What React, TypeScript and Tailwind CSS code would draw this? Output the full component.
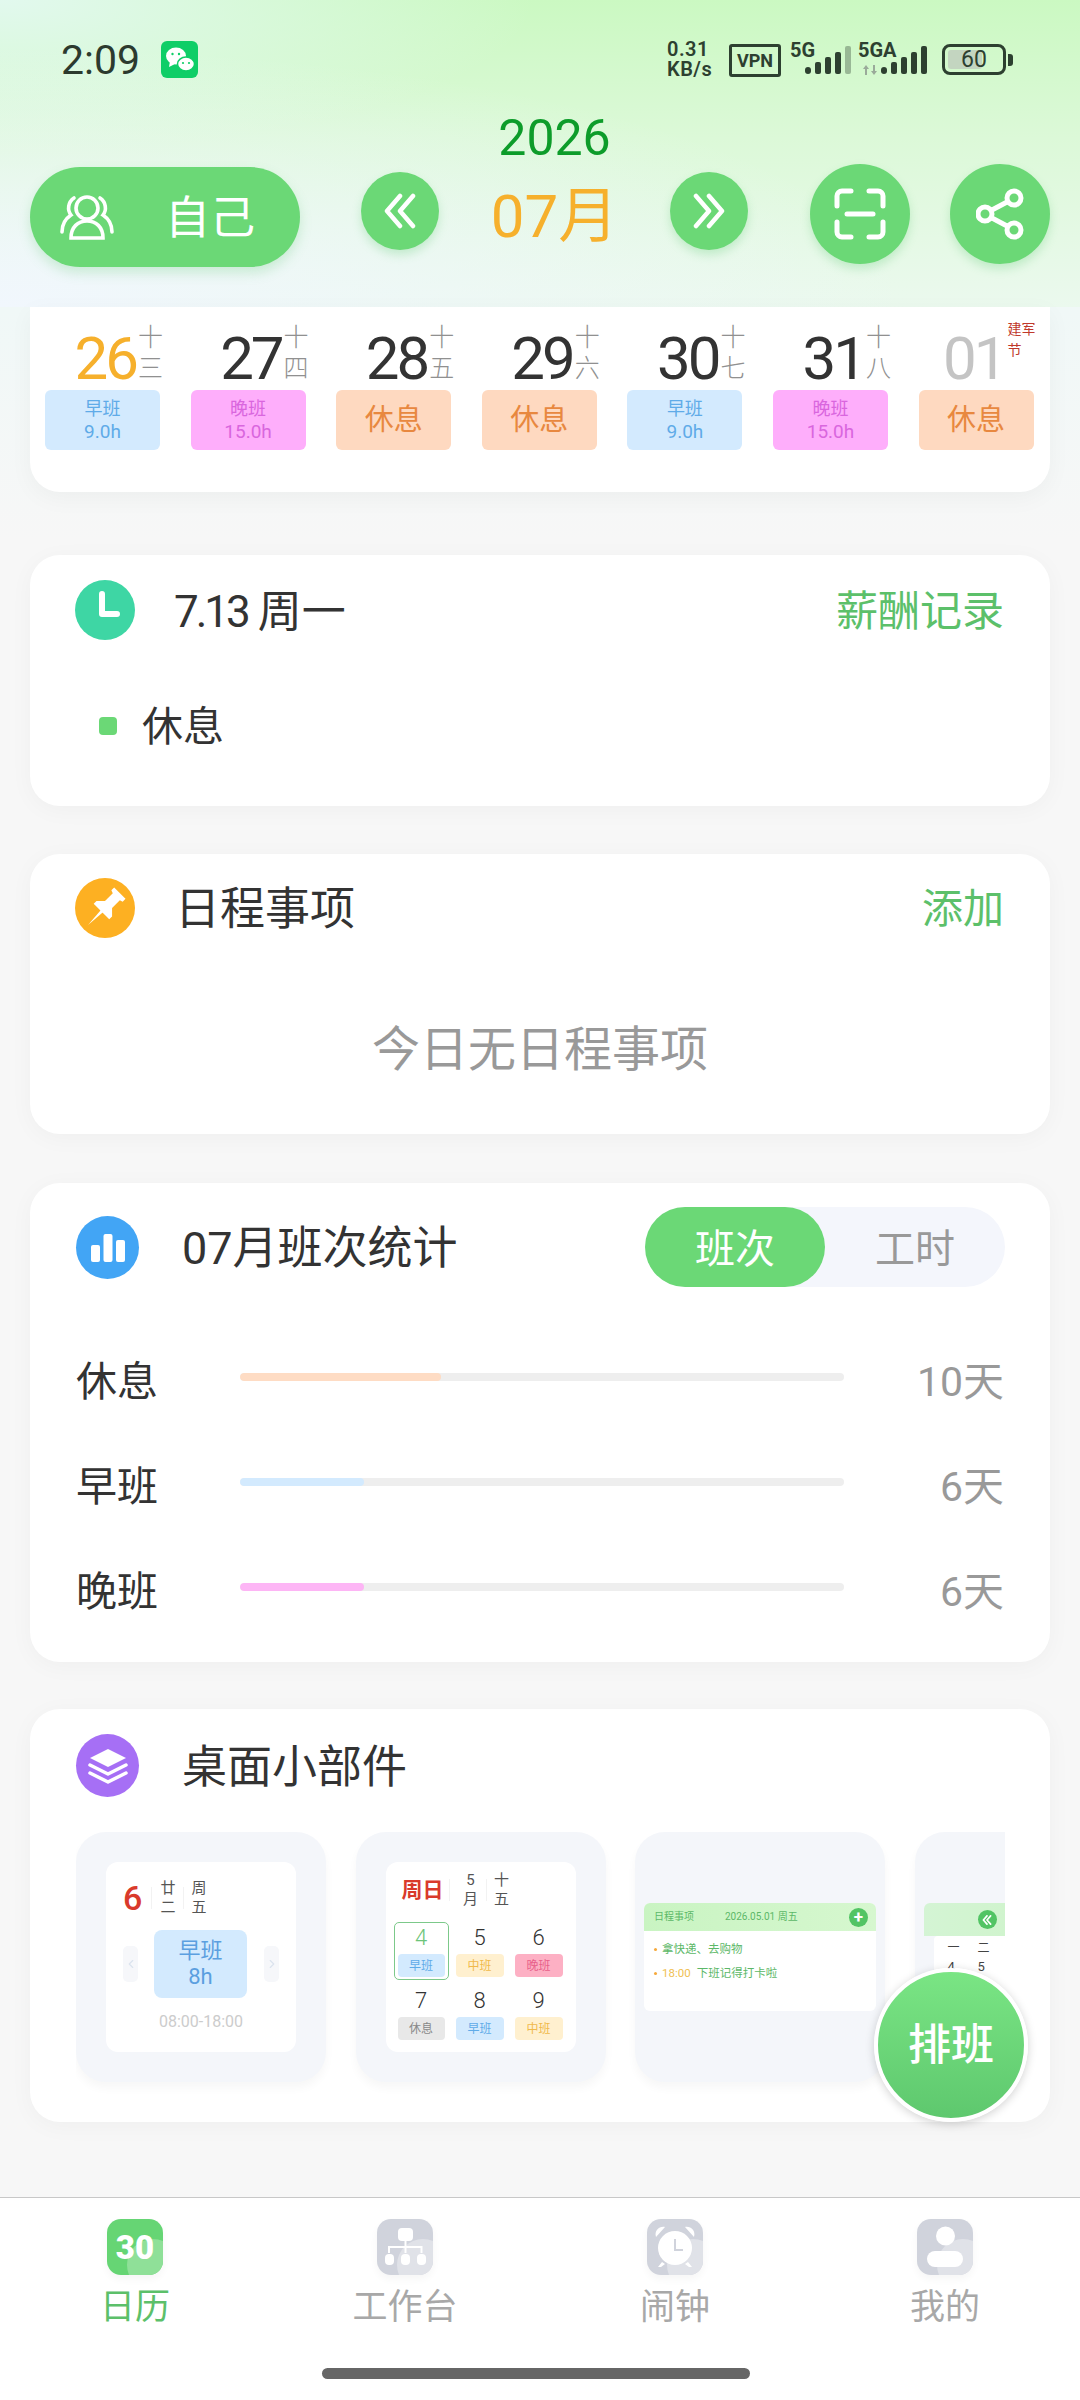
import type { ReactNode } from 'react'
import { ChevronLeft, ChevronRight } from 'lucide-react'

type Shift = 'early' | 'late' | 'rest'

const week: { day: string; lunar: string[]; shift: Shift; hours?: string; tone: string; holiday?: boolean }[] = [
  { day: '26', lunar: ['十', '三'], shift: 'early', hours: '9.0h', tone: 'text-[#f6b02c]' },
  { day: '27', lunar: ['十', '四'], shift: 'late', hours: '15.0h', tone: 'text-[#333333]' },
  { day: '28', lunar: ['十', '五'], shift: 'rest', tone: 'text-[#333333]' },
  { day: '29', lunar: ['十', '六'], shift: 'rest', tone: 'text-[#333333]' },
  { day: '30', lunar: ['十', '七'], shift: 'early', hours: '9.0h', tone: 'text-[#333333]' },
  { day: '31', lunar: ['十', '八'], shift: 'late', hours: '15.0h', tone: 'text-[#333333]' },
  { day: '01', lunar: ['建军', '节'], shift: 'rest', tone: 'text-[#c4c4c4]', holiday: true },
]

const chipStyle: Record<Shift, string> = {
  early: 'bg-[#d3eafe] text-[#5fabe8]',
  late: 'bg-[#feaefb] text-[#d966de]',
  rest: 'bg-[#fed9c0] text-[#e8883f]',
}

const chipLabel: Record<Shift, string> = { early: '早班', late: '晚班', rest: '休息' }

const stats = [
  { label: '休息', value: '10天', fill: 'w-[201px] bg-[#fedcc4]' },
  { label: '早班', value: '6天', fill: 'w-[124px] bg-[#d3eafe]' },
  { label: '晚班', value: '6天', fill: 'w-[124px] bg-[#fdb5f5]' },
]

const miniDays = [
  { day: '4', label: '早班', chip: 'bg-[#d3eafe] text-[#5fabe8]', active: true },
  { day: '5', label: '中班', chip: 'bg-[#fff0cf] text-[#f0b94b]' },
  { day: '6', label: '晚班', chip: 'bg-[#fdb0c4] text-[#e8608a]' },
  { day: '7', label: '休息', chip: 'bg-[#e8e8e8] text-[#888888]' },
  { day: '8', label: '早班', chip: 'bg-[#d3eafe] text-[#5fabe8]' },
  { day: '9', label: '中班', chip: 'bg-[#fff0cf] text-[#f0b94b]' },
]

function Signal({ lastDim }: { lastDim?: boolean }) {
  return (
    <svg width="46" height="28" viewBox="0 0 46 28" fill="#2d4030">
      <rect x="0" y="21" width="6" height="7" rx="3" />
      <rect x="10" y="16" width="6" height="12" rx="2" />
      <rect x="20" y="11" width="6" height="17" rx="2" />
      <rect x="30" y="6" width="6" height="22" rx="2" />
      <rect x="40" y="0" width="6" height="28" rx="2" opacity={lastDim ? 0.35 : 1} />
    </svg>
  )
}

function StatusBar() {
  return (
    <div className="flex h-[105px] items-start pt-[41px]">
      <span className="ml-[61px] w-[80px] text-[41px] leading-[38px] text-[#2c3a2e]">2:09</span>
      <div className="ml-[20px] flex h-[37px] w-[37px] items-center justify-center rounded-[6px] bg-[#0fce67]">
        <svg width="30" height="28" viewBox="0 0 30 28" fill="#ffffff">
          <ellipse cx="11" cy="10" rx="10" ry="8.5" />
          <path d="M5 15l-1 6 6-3z" />
          <ellipse cx="21" cy="18" rx="8.5" ry="7" stroke="#0fce67" strokeWidth="1.5" />
          <circle cx="7.5" cy="8" r="1.2" fill="#0fce67" />
          <circle cx="14" cy="8" r="1.2" fill="#0fce67" />
          <circle cx="18" cy="17" r="1.1" fill="#0fce67" />
          <circle cx="24" cy="17" r="1.1" fill="#0fce67" />
        </svg>
      </div>
      <div className="ml-[469px] -mt-[2px] flex w-[50px] flex-col text-[20px] leading-[20px] font-semibold tracking-[0.5px] text-[#2d4030]">
        <span>0.31</span>
        <span>KB/s</span>
      </div>
      <div className="ml-[12px] mt-[3px] flex h-[33px] w-[52px] items-center justify-center rounded-[3px] border-[3px] border-[#2d4030] text-[18px] font-bold text-[#2d4030]">
        VPN
      </div>
      <div className="relative ml-[9px] h-[34px] w-[61px]">
        <span className="block text-[20px] leading-[18px] font-bold text-[#2d4030]">5G</span>
        <div className="absolute top-[5px] left-[15px]">
          <Signal lastDim />
        </div>
      </div>
      <div className="relative ml-[7px] h-[34px] w-[69px]">
        <span className="block text-[20px] leading-[18px] font-bold text-[#2d4030]">5GA</span>
        <svg className="absolute top-[24px] left-[5px]" width="14" height="10" viewBox="0 0 14 10" fill="#9aaa9a">
          <path d="M3 0l3 4H4v6H2V4H0zM11 10L8 6h2V0h2v6h2z" />
        </svg>
        <div className="absolute top-[5px] left-[23px]">
          <Signal />
        </div>
      </div>
      <div className="ml-[15px] mt-[3px] flex items-center">
        <div className="relative flex h-[31px] w-[64px] items-center justify-center overflow-hidden rounded-[8px] border-[3px] border-[#2d4030] p-[3px]">
          <div className="absolute top-[3px] bottom-[3px] left-[3px] w-[34px] rounded-[3px] bg-[#c3d5c0]" />
          <span className="relative text-[23px] leading-none text-[#2d4030]">60</span>
        </div>
        <div className="ml-[2px] h-[12px] w-[5px] rounded-r-[3px] bg-[#2d4030]" />
      </div>
    </div>
  )
}

function RoundButton({ size, children, extra }: { size: string; children: ReactNode; extra: string }) {
  return (
    <div className={`flex shrink-0 items-center justify-center rounded-full bg-[#6bd876] shadow-[0_5px_10px_rgba(90,200,110,0.28)] ${size} ${extra}`}>
      {children}
    </div>
  )
}

function DoubleChevron({ flip }: { flip?: boolean }) {
  return (
    <svg width="32" height="36" viewBox="0 0 32 36" fill="none" stroke="#ffffff" strokeWidth="4.5" strokeLinecap="round" strokeLinejoin="round" className={flip ? 'rotate-180' : ''}>
      <path d="M16 3L3 18l13 15" />
      <path d="M29 3L16 18l13 15" />
    </svg>
  )
}

function Header() {
  return (
    <div className="h-[307px] shrink-0 bg-[radial-gradient(ellipse_at_0%_100%,#f1f7fd_0%,rgba(241,247,253,0)_60%),radial-gradient(ellipse_at_0%_0%,#e2f9ee_0%,rgba(226,249,238,0)_35%),linear-gradient(180deg,#cbf9c2_0%,#dcf9d8_45%,#ebf9ee_100%)]">
      <StatusBar />
      <div className="flex h-[170px] items-start">
        <div className="ml-[30px] mt-[62px] flex h-[100px] w-[270px] shrink-0 items-center rounded-full bg-[#6bd876] pl-[30px] shadow-[0_6px_12px_rgba(90,200,110,0.25)]">
          <svg width="54" height="46" viewBox="0 0 54 46" fill="none" stroke="#ffffff" strokeWidth="3.6" strokeLinecap="round">
            <circle cx="27" cy="14" r="11" />
            <path d="M11 44C11 33 18 27 27 27S43 33 43 44Z" />
            <path d="M14 4C8 8 7 16 11 21 5 25 2 31 2 38" />
            <path d="M40 4C46 8 47 16 43 21 49 25 52 31 52 38" />
          </svg>
          <span className="ml-[51px] mt-[3px] text-[45px] leading-none text-white">自己</span>
        </div>
        <RoundButton size="h-[78px] w-[78px]" extra="ml-[61px] mt-[67px]">
          <DoubleChevron />
        </RoundButton>
        <div className="flex w-[231px] shrink-0 flex-col items-center">
          <span className="mt-[8px] text-[50px] leading-[50px] text-[#0d9c2a]">2026</span>
          <span className="mt-[22px] text-[60px] leading-[64px] text-[#f6b02c]">07月</span>
        </div>
        <RoundButton size="h-[78px] w-[78px]" extra="mt-[67px]">
          <DoubleChevron flip />
        </RoundButton>
        <RoundButton size="h-[100px] w-[100px]" extra="ml-[62px] mt-[59px]">
          <svg width="52" height="52" viewBox="0 0 52 52" fill="none" stroke="#ffffff" strokeWidth="5" strokeLinecap="round">
            <path d="M3 18V8a5 5 0 0 1 5-5h9" />
            <path d="M35 3h9a5 5 0 0 1 5 5v10" />
            <path d="M3 34v10a5 5 0 0 0 5 5h9" />
            <path d="M49 34v10a5 5 0 0 1-5 5h-9" />
            <path d="M13 26h26" />
          </svg>
        </RoundButton>
        <RoundButton size="h-[100px] w-[100px]" extra="ml-[40px] mt-[59px]">
          <svg width="48" height="52" viewBox="0 0 48 52" fill="none" stroke="#ffffff" strokeWidth="5">
            <circle cx="38" cy="10" r="7" />
            <circle cx="9" cy="26" r="7" />
            <circle cx="38" cy="42" r="7" />
            <path d="M15 22.5L32 13.5M15 29.5L32 38.5" />
          </svg>
        </RoundButton>
      </div>
    </div>
  )
}

function CalendarStrip() {
  return (
    <div className="flex h-[185px] gap-[30.6px] rounded-b-[30px] bg-white px-[15px] pt-[17px] shadow-[0_6px_24px_rgba(0,0,0,0.04)]">
      {week.map((d) => (
        <div key={d.day} className="w-[115px] shrink-0">
          <div className="flex h-[66px] items-end justify-end">
            <span className={`text-[60px] leading-[62px] tracking-[-3px] ${d.tone}`}>{d.day}</span>
            {d.holiday ? (
              <div className="-mr-[2px] mb-[29px] ml-[3px] w-[28px] text-[14px] leading-[21px] text-[#c0392b]">
                <div className="whitespace-nowrap">{d.lunar[0]}</div>
                <div>{d.lunar[1]}</div>
              </div>
            ) : (
              <div className="-mr-[2px] mb-[6px] ml-[3px] flex w-[23px] flex-col items-center text-[25px] leading-[31px] font-light text-[#909090]">
                <span>{d.lunar[0]}</span>
                <span>{d.lunar[1]}</span>
              </div>
            )}
          </div>
          <div className={`flex h-[60px] flex-col items-center justify-center rounded-[6px] ${chipStyle[d.shift]}`}>
            {d.hours ? (
              <>
                <span className="text-[18px] leading-[23px]">{chipLabel[d.shift]}</span>
                <span className="text-[19px] leading-[23px]">{d.hours}</span>
              </>
            ) : (
              <span className="text-[29px] leading-none">{chipLabel[d.shift]}</span>
            )}
          </div>
        </div>
      ))}
    </div>
  )
}

function IconDot({ color, size, children }: { color: string; size: string; children: ReactNode }) {
  return <div className={`flex shrink-0 items-center justify-center rounded-full ${color} ${size}`}>{children}</div>
}

function TodayCard() {
  return (
    <section className="mt-[63px] h-[251px] rounded-[30px] bg-white pt-[25px] shadow-[0_4px_24px_rgba(0,0,0,0.035)]">
      <div className="flex h-[60px] items-center pr-[46px] pl-[45px]">
        <IconDot color="bg-[#3ed6a4]" size="h-[60px] w-[60px]">
          <svg width="60" height="60" viewBox="0 0 60 60" fill="none" stroke="#ffffff" strokeWidth="6" strokeLinecap="round" strokeLinejoin="round">
            <path d="M27 14v20h15" />
          </svg>
        </IconDot>
        <span className="ml-[39px] mt-[3px] text-[44px] leading-none tracking-[-3px] text-[#333333]">7.13</span>
        <span className="ml-[10px] mt-[3px] text-[44px] leading-none text-[#333333]">周一</span>
        <span className="ml-auto mt-[3px] text-[42px] leading-none text-[#5cc06a]">薪酬记录</span>
      </div>
      <div className="mt-[59px] ml-[69px] flex items-center">
        <div className="h-[18px] w-[18px] rounded-[4px] bg-[#6bd876]" />
        <span className="ml-[25px] mt-[3px] text-[41px] leading-[50px] text-[#333333]">休息</span>
      </div>
    </section>
  )
}

function ScheduleCard() {
  return (
    <section className="mt-[48px] h-[280px] rounded-[30px] bg-white pt-[24px] shadow-[0_4px_24px_rgba(0,0,0,0.035)]">
      <div className="flex h-[60px] items-center pr-[46px] pl-[45px]">
        <IconDot color="bg-[#fdb022]" size="h-[60px] w-[60px]">
          <svg width="60" height="60" viewBox="0 0 60 60" fill="#ffffff">
            <g transform="rotate(45 30 30)">
              <path d="M22 9h16v4l-3 1v11l6 6v4H19v-4l6-6V14l-3-1z" />
              <path d="M28.5 34h3L30 54z" />
            </g>
          </svg>
        </IconDot>
        <span className="ml-[40px] mt-[3px] text-[45px] leading-none text-[#333333]">日程事项</span>
        <span className="ml-auto mt-[3px] text-[41px] leading-none text-[#5cc06a]">添加</span>
      </div>
      <div className="mt-[82px] text-center text-[48px] leading-[60px] text-[#999999]">今日无日程事项</div>
    </section>
  )
}

function StatsCard() {
  return (
    <section className="mt-[49px] h-[479px] rounded-[30px] bg-white pt-[24px] shadow-[0_4px_24px_rgba(0,0,0,0.035)]">
      <div className="flex h-[80px] items-center pr-[45px] pl-[46px]">
        <IconDot color="bg-[#42a5f5]" size="h-[63px] w-[63px]">
          <svg width="36" height="30" viewBox="0 0 36 30" fill="#ffffff">
            <rect x="1" y="13" width="9" height="17" rx="2" />
            <rect x="13.5" y="2" width="9" height="28" rx="2" />
            <rect x="26" y="8" width="9" height="22" rx="2" />
          </svg>
        </IconDot>
        <span className="ml-[43px] mt-[3px] text-[45px] leading-none text-[#333333]">07月班次统计</span>
        <div className="ml-auto flex h-[80px] w-[360px] rounded-full bg-[#f4f6fc]">
          <div className="flex h-[80px] w-[180px] items-center justify-center rounded-full bg-[#6bd876] pt-[5px] text-[40px] leading-none text-white">班次</div>
          <div className="flex h-[80px] w-[180px] items-center justify-center pt-[5px] text-[40px] leading-none text-[#999999]">工时</div>
        </div>
      </div>
      <div className="mt-[68px] flex flex-col gap-[55px] pr-[46px] pl-[46px]">
        {stats.map((s) => (
          <div key={s.label} className="flex h-[50px] items-center">
            <span className="mt-[5px] w-[164px] text-[41px] leading-none text-[#333333]">{s.label}</span>
            <div className="mb-[6px] h-[8px] w-[604px] overflow-hidden rounded-full bg-[#eeeeee]">
              <div className={`h-full rounded-full ${s.fill}`} />
            </div>
            <span className="mt-[5px] flex-1 text-right text-[41px] leading-none text-[#999999]">{s.value}</span>
          </div>
        ))}
      </div>
    </section>
  )
}

function Tile({ children }: { children: ReactNode }) {
  return (
    <div className="flex h-[250px] w-[250px] shrink-0 items-center justify-center rounded-[30px] bg-[#f4f6fa] shadow-[0_6px_10px_rgba(0,0,0,0.035)]">
      {children}
    </div>
  )
}

function TwoChar({ top, bottom, width }: { top: string; bottom: string; width: string }) {
  return (
    <div className={`flex flex-col items-center text-[15px] leading-[19px] text-[#555555] ${width}`}>
      <span>{top}</span>
      <span>{bottom}</span>
    </div>
  )
}

function ShiftTile() {
  return (
    <Tile>
      <div className="h-[190px] w-[190px] rounded-[12px] bg-white">
        <div className="flex h-[38px] translate-y-[17px] items-center pl-[17px]">
          <span className="w-[22px] text-[34px] leading-none font-medium text-[#d93a2b]">6</span>
          <div className="ml-[6px] h-[22px] w-px bg-[#f2f2f2]" />
          <TwoChar top="廿" bottom="二" width="ml-[7px] w-[18px]" />
          <div className="ml-[6px] h-[22px] w-px bg-[#f2f2f2]" />
          <TwoChar top="周" bottom="五" width="ml-[6px] w-[18px]" />
        </div>
        <div className="mt-[30px] flex items-center pl-[17px]">
          <div className="flex h-[36px] w-[15px] items-center justify-center rounded-[5px] bg-[#f6f7fa]">
            <ChevronLeft size={14} className="text-[#dbe3ee]" />
          </div>
          <div className="ml-[16px] flex h-[68px] w-[93px] flex-col items-center justify-center rounded-[8px] bg-[#d3eafe] text-[22px] leading-[26px] text-[#5b9fe0]">
            <span>早班</span>
            <span>8h</span>
          </div>
          <div className="ml-[17px] flex h-[36px] w-[15px] items-center justify-center rounded-[5px] bg-[#f6f7fa]">
            <ChevronRight size={14} className="text-[#dbe3ee]" />
          </div>
        </div>
        <div className="mt-[15px] text-center text-[16px] leading-[18px] text-[#cccccc]">08:00-18:00</div>
      </div>
    </Tile>
  )
}

function MonthTile() {
  return (
    <Tile>
      <div className="h-[190px] w-[190px] rounded-[12px] bg-white">
        <div className="box-content flex h-[38px] items-center pt-[9px] pl-[16px]">
          <span className="w-[44px] text-[21px] leading-none font-bold text-[#d93a2b]">周日</span>
          <div className="ml-[3px] h-[22px] w-px bg-[#f2f2f2]" />
          <TwoChar top="5" bottom="月" width="ml-[13px] w-[16px]" />
          <div className="ml-[7px] h-[22px] w-px bg-[#f2f2f2]" />
          <TwoChar top="十" bottom="五" width="ml-[7px] w-[16px]" />
        </div>
        <div className="mt-[13px] grid grid-cols-[47px_48px_48px] gap-x-[11px] gap-y-[8px] pl-[12px]">
          {miniDays.map((d) => (
            <div key={d.day} className="relative flex flex-col items-center">
              {d.active && <div className="absolute -inset-x-[4px] top-0 -bottom-[3px] rounded-[5px] border border-[#7cc98a]" />}
              <span className={`h-[32px] text-[22px] leading-[32px] font-light ${d.active ? 'text-[#6cc47a]' : 'text-[#333333]'}`}>{d.day}</span>
              <div className={`relative flex h-[23px] w-full items-center justify-center rounded-[4px] text-[12px] leading-none ${d.chip}`}>{d.label}</div>
            </div>
          ))}
        </div>
      </div>
    </Tile>
  )
}

function AgendaTile() {
  return (
    <Tile>
      <div className="h-[108px] w-[232px] overflow-hidden rounded-[6px] bg-white">
        <div className="flex h-[28px] items-center bg-[linear-gradient(90deg,#c9f4c2,#d6f7cf)] pr-[8px] pl-[10px] text-[#5cb868]">
          <span className="text-[10px] leading-none">日程事项</span>
          <span className="ml-[31px] text-[10px] leading-none">2026.05.01 周五</span>
          <div className="ml-auto flex h-[19px] w-[19px] items-center justify-center rounded-full bg-[#52c464] text-[17px] leading-none font-bold text-white">+</div>
        </div>
        <div className="mt-[10px] flex items-center pl-[10px] text-[11.5px] leading-[16px] text-[#5cb868]">
          <span className="mr-[5px] h-[3px] w-[3px] rounded-full bg-[#f6a93b]" />
          拿快递、去购物
        </div>
        <div className="mt-[8px] flex items-center pl-[10px] text-[11.5px] leading-[16px] text-[#5cb868]">
          <span className="mr-[5px] h-[3px] w-[3px] rounded-full bg-[#f6a93b]" />
          <span className="mr-[6px] text-[#f0c052]">18:00</span>
          下班记得打卡啦
        </div>
      </div>
    </Tile>
  )
}

function MonthTilePeek() {
  return (
    <Tile>
      <div className="h-[108px] w-[232px] overflow-hidden rounded-[6px] bg-[#f4f6fa]">
        <div className="flex h-[33px] items-center bg-[linear-gradient(90deg,#d4f4d4,#c9f4c2)] pl-[54px]">
          <div className="flex h-[19px] w-[19px] items-center justify-center rounded-full bg-[#52c464]">
            <svg width="10" height="10" viewBox="0 0 32 36" fill="none" stroke="#ffffff" strokeWidth="6" strokeLinecap="round" strokeLinejoin="round">
              <path d="M16 3L3 18l13 15" />
              <path d="M29 3L16 18l13 15" />
            </svg>
          </div>
        </div>
        <div className="ml-[10px] h-[75px] rounded-t-[4px] bg-white pt-[5px] text-[12px] leading-[14px] text-[#444444]">
          <div className="flex pl-[14px]">
            <span className="w-[30px]">一</span>
            <span>二</span>
          </div>
          <div className="mt-[5px] flex pl-[14px] text-[13px]">
            <span className="w-[30px]">4</span>
            <span>5</span>
          </div>
        </div>
      </div>
    </Tile>
  )
}

function WidgetsCard() {
  return (
    <section className="relative mt-[47px] h-[413px] rounded-[30px] bg-white pt-[25px] shadow-[0_4px_24px_rgba(0,0,0,0.035)]">
      <div className="flex h-[63px] items-center pl-[46px]">
        <IconDot color="bg-[#a66ff5]" size="h-[63px] w-[63px]">
          <svg width="40" height="36" viewBox="0 0 40 36" fill="#ffffff">
            <path d="M20 1l18 9-18 9-18-9z" />
            <path d="M2 17l18 9 18-9" fill="none" stroke="#ffffff" strokeWidth="3.5" strokeLinecap="round" strokeLinejoin="round" />
            <path d="M2 25l18 9 18-9" fill="none" stroke="#ffffff" strokeWidth="3.5" strokeLinecap="round" strokeLinejoin="round" />
          </svg>
        </IconDot>
        <span className="ml-[43px] mt-[3px] text-[45px] leading-none text-[#333333]">桌面小部件</span>
      </div>
      <div className="mt-[35px] ml-[46px] flex h-[262px] w-[929px] gap-[29.5px] overflow-hidden">
        <ShiftTile />
        <MonthTile />
        <AgendaTile />
        <MonthTilePeek />
      </div>
      <div className="absolute right-[22px] bottom-0 flex h-[154px] w-[154px] items-center justify-center rounded-full border-[4px] border-white bg-[linear-gradient(180deg,#7ae584,#5ec86e)] text-[43px] leading-none font-medium text-white shadow-[0_2px_10px_rgba(0,0,0,0.18)]">
        排班
      </div>
    </section>
  )
}

function TabIcon({ active, children }: { active?: boolean; children: ReactNode }) {
  return (
    <div className={`relative h-[56px] w-[56px] overflow-hidden rounded-[14px] shadow-[0_4px_8px_rgba(0,0,0,0.04)] ${active ? 'bg-[#66d574]' : 'bg-[#d0d3dc]'}`}>
      <div className={`absolute top-[20px] left-[20px] h-[52px] w-[52px] rounded-full ${active ? 'bg-[#8fe098]' : 'bg-[#e0e2e8]'}`} />
      <div className="absolute inset-0 flex items-center justify-center">{children}</div>
    </div>
  )
}

function BottomNav() {
  const tabs: { label: string; active?: boolean; icon: ReactNode }[] = [
    {
      label: '日历',
      active: true,
      icon: <span className="text-[33px] leading-none font-black text-white">30</span>,
    },
    {
      label: '工作台',
      icon: (
        <svg width="56" height="56" viewBox="0 0 56 56" fill="#ffffff">
          <rect x="21" y="9" width="15" height="13" rx="4" />
          <path d="M27.5 22h2v5h16v7h-2v-5H29.5v5h-2v-5H13v5h-2v-7h16.5z" />
          <rect x="8" y="35" width="9" height="11" rx="4" />
          <rect x="24" y="35" width="9" height="11" rx="4" />
          <rect x="40" y="35" width="9" height="11" rx="4" />
        </svg>
      ),
    },
    {
      label: '闹钟',
      icon: (
        <svg width="56" height="56" viewBox="0 0 56 56" fill="#ffffff">
          <circle cx="28" cy="29" r="17" />
          <path d="M9 18c-2-6 3-11 9-10zM47 18c2-6-3-11-9-10z" />
          <path d="M15 43l-4 5h3l4-3zM41 43l4 5h-3l-4-3z" />
          <path d="M28 20v11h8" fill="none" stroke="#d0d3dc" strokeWidth="2" />
        </svg>
      ),
    },
    {
      label: '我的',
      icon: (
        <svg width="56" height="56" viewBox="0 0 56 56" fill="#ffffff">
          <circle cx="28.5" cy="17" r="9.5" />
          <rect x="10" y="32" width="36" height="16" rx="8" />
        </svg>
      ),
    },
  ]

  return (
    <nav className="relative h-[203px] shrink-0 border-t border-[#c8c8c8] bg-white">
      <div className="grid grid-cols-4 pt-[21px]">
        {tabs.map((t) => (
          <div key={t.label} className="flex flex-col items-center">
            <TabIcon active={t.active}>{t.icon}</TabIcon>
            <span className={`mt-[12px] text-[35px] leading-[42px] ${t.active ? 'text-[#5cc06a]' : 'text-[#a8a8a8]'}`}>{t.label}</span>
          </div>
        ))}
      </div>
      <div className="mt-[39px] ml-[322px] h-[11px] w-[428px] rounded-full bg-[#666666]" />
    </nav>
  )
}

export default function App() {
  return (
    <div className="flex h-[2400px] w-[1080px] flex-col overflow-hidden bg-[linear-gradient(180deg,#eff8f5_0px,#f0f8f7_310px,#f7f7f7_540px)] font-['Roboto','Noto_Sans_CJK_SC',sans-serif]">
      <Header />
      <main className="flex-1 px-[30px]">
        <CalendarStrip />
        <TodayCard />
        <ScheduleCard />
        <StatsCard />
        <WidgetsCard />
      </main>
      <BottomNav />
    </div>
  )
}
